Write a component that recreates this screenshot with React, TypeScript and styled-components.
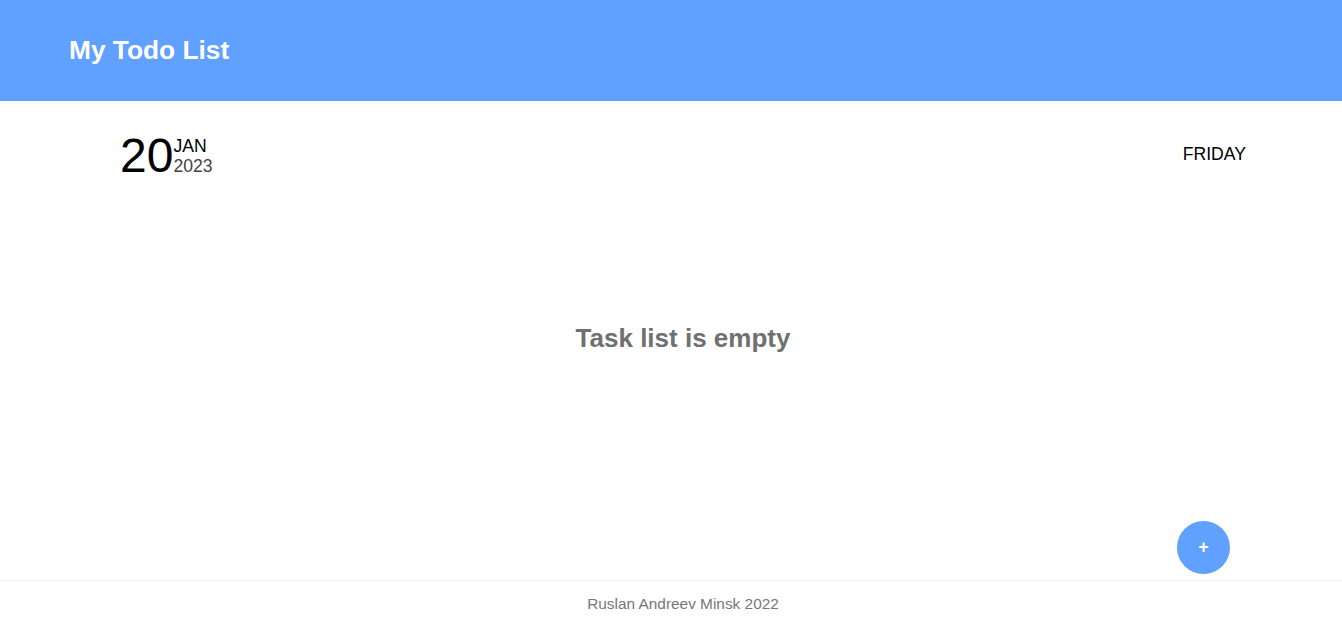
import React from "react";
import styled, { createGlobalStyle } from "styled-components";

const GlobalStyle = createGlobalStyle`
  * { box-sizing: border-box; }
  html, body { margin: 0; padding: 0; background: #fff; }
  body { font-family: "Liberation Sans", Arial, sans-serif; }
`;

const Page = styled.div`
  display: flex;
  flex-direction: column;
  min-height: 100vh;
`;

const Header = styled.header`
  height: 101px;
  background: #60a0ff;
  display: flex;
  align-items: center;
  padding-left: 69px;
`;

const Title = styled.h1`
  margin: 0;
  color: #fff;
  font-size: 26.3px;
  font-weight: 700;
`;

const Main = styled.main`
  height: 479px;
  display: flex;
  flex-direction: column;
  padding: 0 96px 0 120px;
`;

const DateRow = styled.div`
  display: flex;
  justify-content: space-between;
  align-items: center;
  padding-top: 31px;
`;

const DateBlock = styled.div`
  display: flex;
  align-items: center;
`;

const Day = styled.span`
  font-size: 48px;
  line-height: 48px;
  color: #000;
`;

const MonthYear = styled.div`
  display: flex;
  flex-direction: column;
  margin-top: -1px;
`;

const Month = styled.span`
  font-size: 17.6px;
  line-height: 20px;
  color: #000;
`;

const Year = styled.span`
  font-size: 17.6px;
  line-height: 20px;
  color: #444;
`;

const Weekday = styled.span`
  font-size: 17.6px;
  color: #000;
  margin-bottom: 3px;
`;

const Empty = styled.div`
  flex: 1;
  display: flex;
  align-items: center;
  justify-content: center;
  padding-bottom: 24px;
`;

const EmptyText = styled.h2`
  margin: 0;
  font-size: 26px;
  font-weight: 700;
  color: #707070;
`;

const ButtonRow = styled.div`
  display: flex;
  justify-content: flex-end;
  padding: 0 16px 6px 0;
`;

const AddButton = styled.button`
  width: 53px;
  height: 53px;
  border-radius: 50%;
  border: none;
  background: #60a0ff;
  color: #fff;
  font-family: "Liberation Sans", Arial, sans-serif;
  font-size: 18px;
  font-weight: 700;
  display: flex;
  align-items: center;
  justify-content: center;
  padding: 0;
  cursor: pointer;
`;

const Footer = styled.footer`
  border-top: 1px solid #eeeeee;
  height: 39px;
  display: flex;
  align-items: center;
  justify-content: center;
  padding: 7px 96px 0 120px;
`;

const FooterText = styled.span`
  font-size: 15.4px;
  color: #777;
`;

export default function App() {
  return (
    <>
      <GlobalStyle />
      <Page>
        <Header>
          <Title>My Todo List</Title>
        </Header>
        <Main>
          <DateRow>
            <DateBlock>
              <Day>20</Day>
              <MonthYear>
                <Month>JAN</Month>
                <Year>2023</Year>
              </MonthYear>
            </DateBlock>
            <Weekday>FRIDAY</Weekday>
          </DateRow>
          <Empty>
            <EmptyText>Task list is empty</EmptyText>
          </Empty>
          <ButtonRow>
            <AddButton>+</AddButton>
          </ButtonRow>
        </Main>
        <Footer>
          <FooterText>Ruslan Andreev Minsk 2022</FooterText>
        </Footer>
      </Page>
    </>
  );
}
